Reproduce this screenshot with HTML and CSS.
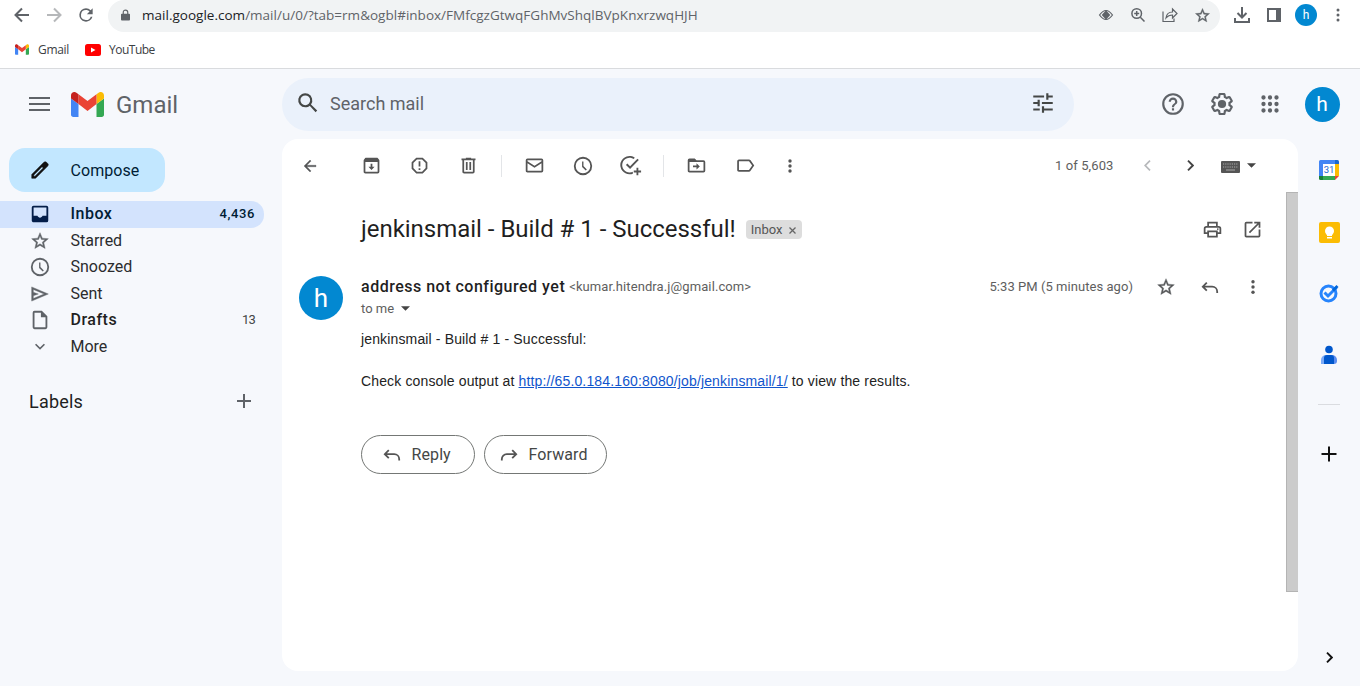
FILE: index.html
```html
<!DOCTYPE html>
<html lang="en">
<head>
<meta charset="utf-8">
<title>Gmail</title>
<link rel="stylesheet" href="styles.css">
</head>
<body>
<div class="chrome">
  <div class="navbar">
    <div class="slot"><svg class="i24 stroke" viewBox="0 0 24 24"><path d="M19 12H6M12 5.500L5.500 12l6.500 6.500"/></svg></div>
    <div class="slot faded"><svg class="i24 stroke" viewBox="0 0 24 24"><path d="M5 12h13M12 5.500l6.500 6.500-6.500 6.500"/></svg></div>
    <div class="slot"><svg class="i20" viewBox="0 0 24 24"><path d="M17.650 6.350A7.960 7.960 0 0 0 12 4a8 8 0 1 0 7.730 10h-2.080A6 6 0 1 1 12 6c1.660 0 3.140.690 4.220 1.780L13 11h7V4z"/></svg></div>
    <div class="omnibox">
      <svg class="lock" viewBox="0 0 10 12"><path d="M1 4.500h8a1 1 0 0 1 1 1V11a1 1 0 0 1-1 1H1a1 1 0 0 1-1-1V5.500a1 1 0 0 1 1-1z"/><path d="M2.500 5V3a2.500 2.500 0 0 1 5 0v2" fill="none" stroke="#5f6368" stroke-width="1.300"/></svg>
      <div class="url"><b>mail.google.com</b>/mail/u/0/?tab=rm&amp;ogbl#inbox/FMfcgzGtwqFGhMvShqlBVpKnxrzwqHJH</div>
      <div class="slot"><svg class="i16" viewBox="0 0 16 16"><path d="M1.500 8Q8-1 14.500 8Q8 17 1.500 8z" fill="none" stroke="#5f6368" stroke-width="1.200"/><path d="M8 3.200L12.300 8 8 12.800 3.700 8z"/></svg></div>
      <div class="slot"><svg class="i16" viewBox="0 0 16 16" fill="none" stroke="#5f6368" stroke-width="1.500"><circle cx="6.700" cy="6.500" r="4.800"/><path d="M10.300 10.300l4.200 4.200M4.200 6.500h5M6.700 4v5"/></svg></div>
      <div class="slot"><svg class="i16" viewBox="0 0 16 16" fill="none" stroke="#5f6368" stroke-width="1.200"><path d="M1 4.500v10h11v-3M4 11c.5-4 3-6 6.500-6V2l4.500 4.500L10.500 11V8C8 8 6 8.500 4 11z"/></svg></div>
      <div class="slot"><svg class="i17 bolder" viewBox="0 0 24 24"><path d="M22 9.240l-7.190-.620L12 2 9.190 8.630 2 9.240l5.460 4.730L5.820 21 12 17.270 18.180 21l-1.630-7.030L22 9.240zM12 15.400l-3.760 2.270 1-4.280-3.320-2.880 4.380-.380L12 6.100l1.710 4.040 4.380.380-3.320 2.880 1 4.280L12 15.400z"/></svg></div>
    </div>
    <div class="slot first"><svg class="i18" viewBox="0 0 18 18" fill="none" stroke="#5f6368" stroke-width="2"><path d="M2 12v4h14v-4M9 1v10M4.500 7L9 11.500 13.500 7"/></svg></div>
    <div class="slot"><svg class="i14" viewBox="0 0 14 14"><path d="M0 0h14v14H0zM2 2v10h7V2z" fill-rule="evenodd"/></svg></div>
    <div class="slot"><div class="avatar tiny">h</div></div>
    <div class="slot"><svg class="i16" viewBox="0 0 16 16"><circle cx="8" cy="3" r="1.500"/><circle cx="8" cy="8" r="1.500"/><circle cx="8" cy="13" r="1.500"/></svg></div>
  </div>
  <div class="bookmarks">
    <svg class="gm-small" viewBox="52 42 88 66"><path fill="#4285f4" d="M58 108h14V74L52 59v43c0 3.320 2.690 6 6 6"/><path fill="#34a853" d="M120 108h14c3.320 0 6-2.690 6-6V59l-20 15"/><path fill="#fbbc04" d="M120 48v26l20-15v-8c0-7.420-8.470-11.650-14.400-7.200"/><path fill="#ea4335" d="M72 74V48l24 18 24-18v26L96 92"/><path fill="#c5221f" d="M52 51v8l20 15V48l-5.600-4.200c-5.940-4.450-14.400-.220-14.400 7.200"/></svg>
    <span class="bm-gmail">Gmail</span>
    <svg class="yt" viewBox="0 0 16 12"><rect width="16" height="12" rx="2.500" fill="#f00"/><path d="M6 3.500v5L10.500 6z" fill="#fff"/></svg>
    <span class="bm-yt">YouTube</span>
  </div>
</div>

<div class="app">
  <header class="header">
    <svg class="burger" viewBox="0 0 21 14"><path d="M0 1h21M0 7h21M0 13h21" stroke="#5f6368" stroke-width="2"/></svg>
    <svg class="gm-logo" viewBox="52 42 88 66" preserveAspectRatio="none"><path fill="#4285f4" d="M58 108h14V74L52 59v43c0 3.320 2.690 6 6 6"/><path fill="#34a853" d="M120 108h14c3.320 0 6-2.690 6-6V59l-20 15"/><path fill="#fbbc04" d="M120 48v26l20-15v-8c0-7.420-8.470-11.650-14.400-7.200"/><path fill="#ea4335" d="M72 74V48l24 18 24-18v26L96 92"/><path fill="#c5221f" d="M52 51v8l20 15V48l-5.600-4.200c-5.940-4.450-14.400-.220-14.400 7.200"/></svg>
    <div class="wordmark">Gmail</div>
    <div class="search">
      <svg class="i26 dark" viewBox="0 0 24 24"><path d="M20.490 19l-5.730-5.730A6.500 6.500 0 1 0 9.500 16c1.610 0 3.090-.590 4.230-1.570L13.750 14.700 19 20.490zM5 9.500a4.500 4.500 0 1 1 9 0 4.500 4.500 0 0 1-9 0z" fill-rule="evenodd"/></svg>
      <span class="placeholder">Search mail</span>
      <svg class="i26 dark" viewBox="0 0 24 24"><path d="M3 17v2h6v-2H3zM3 5v2h10V5H3zm10 16v-2h8v-2h-8v-2h-2v6h2zM7 9v2H3v2h4v2h2V9H7zm14 4v-2H11v2h10zm-6-4h2V7h4V5h-4V3h-2v6z"/></svg>
    </div>
    <div class="head-icons">
      <svg class="i26" viewBox="0 0 24 24"><path d="M11 18h2v-2h-2v2zm1-16a10 10 0 1 0 0 20 10 10 0 0 0 0-20zm0 18a8 8 0 1 1 0-16 8 8 0 0 1 0 16zm0-14a4 4 0 0 0-4 4h2a2 2 0 1 1 4 0c0 2-3 1.750-3 5h2c0-2.250 3-2.500 3-5a4 4 0 0 0-4-4z"/></svg>
      <svg class="i26" viewBox="0 0 24 24"><path d="M13.850 22.250h-3.700c-.740 0-1.360-.540-1.450-1.270l-.270-1.890c-.270-.140-.530-.290-.790-.460l-1.800.720c-.700.260-1.470-.030-1.810-.650L2.200 15.530c-.350-.660-.200-1.440.360-1.880l1.530-1.190c-.010-.150-.020-.300-.020-.460 0-.150.010-.310.020-.460l-1.520-1.190c-.590-.450-.740-1.260-.370-1.880l1.850-3.190c.340-.620 1.110-.900 1.790-.630l1.810.730c.260-.170.520-.320.780-.460l.270-1.910c.090-.700.710-1.250 1.440-1.250h3.700c.740 0 1.360.540 1.450 1.270l.270 1.890c.270.140.530.290.790.460l1.800-.720c.710-.260 1.480.030 1.820.650l1.840 3.180c.360.660.200 1.440-.360 1.880l-1.520 1.190c.010.150.020.300.020.460s-.010.310-.020.460l1.520 1.190c.560.450.720 1.230.370 1.860l-1.860 3.220c-.340.620-1.110.900-1.800.630l-1.800-.720c-.260.170-.520.320-.780.460l-.270 1.910c-.100.680-.720 1.220-1.460 1.220zm-3.230-2h2.760l.370-2.550.530-.220c.440-.180.880-.440 1.340-.780l.450-.340 2.380.960 1.380-2.400-2.030-1.580.070-.560c.030-.260.060-.510.060-.780s-.030-.530-.060-.780l-.070-.560 2.030-1.580-1.390-2.400-2.390.960-.450-.350c-.420-.320-.870-.580-1.330-.770l-.520-.220-.370-2.550h-2.760l-.370 2.550-.530.210c-.440.190-.880.440-1.340.790l-.450.330-2.380-.950-1.390 2.390 2.030 1.580-.070.560a7 7 0 0 0 0 1.560l.070.560-2.030 1.580 1.380 2.400 2.390-.960.450.350c.430.330.860.580 1.330.770l.530.220z"/><circle cx="12" cy="12" r="3.800"/></svg>
      <svg class="i26" viewBox="0 0 24 24"><path d="M6 8a2 2 0 1 0 0-4 2 2 0 0 0 0 4zm6 12a2 2 0 1 0 0-4 2 2 0 0 0 0 4zm-6 0a2 2 0 1 0 0-4 2 2 0 0 0 0 4zm0-6a2 2 0 1 0 0-4 2 2 0 0 0 0 4zm6 0a2 2 0 1 0 0-4 2 2 0 0 0 0 4zm6-6a2 2 0 1 0 0-4 2 2 0 0 0 0 4zm-6 0a2 2 0 1 0 0-4 2 2 0 0 0 0 4zm6 6a2 2 0 1 0 0-4 2 2 0 0 0 0 4zm0 6a2 2 0 1 0 0-4 2 2 0 0 0 0 4z"/></svg>
      <div class="avatar mid">h</div>
    </div>
  </header>

  <div class="columns">
    <nav class="sidebar">
      <div class="compose">
        <svg class="i22 black" viewBox="0 0 24 24"><path d="M20.410 4.940l-1.350-1.350a2 2 0 0 0-2.830 0L3 16.820V21h4.180L20.410 7.770a2 2 0 0 0 0-2.830zM6.350 19L5 17.650l9.200-9.200 1.350 1.350L6.350 19z" stroke="#111" stroke-width=".6"/></svg>
        <span class="t-compose">Compose</span>
      </div>
      <div class="item active"><svg class="i22" viewBox="0 0 24 24"><path d="M19 3H5a2 2 0 0 0-2 2v14c0 1.100.900 2 2 2h14a2 2 0 0 0 2-2V5a2 2 0 0 0-2-2zm0 11h-4.200c-.500 1.200-1.600 2-2.800 2s-2.300-.800-2.800-2H5V5h14z"/></svg><span class="t-inbox">Inbox</span><em>4,436</em></div>
      <div class="item"><svg class="i20 bolder" viewBox="0 0 24 24"><path d="M22 9.240l-7.190-.620L12 2 9.190 8.630 2 9.240l5.460 4.730L5.820 21 12 17.270 18.180 21l-1.630-7.030L22 9.240zM12 15.400l-3.760 2.270 1-4.280-3.320-2.880 4.380-.380L12 6.100l1.710 4.040 4.380.380-3.320 2.880 1 4.280L12 15.400z"/></svg><span class="t-star">Starred</span></div>
      <div class="item"><svg class="i22" viewBox="0 0 24 24"><path d="M12 2a10 10 0 1 0 0 20 10 10 0 0 0 0-20zm0 18a8 8 0 1 1 0-16 8 8 0 0 1 0 16zM12.500 7H11v6l4 4 1.200-1.200-3.700-3.800z"/></svg><span class="t-snooze">Snoozed</span></div>
      <div class="item"><svg class="i20 bolder" viewBox="0 0 24 24"><path d="M2 3.500v17L22 12 2 3.500zm2 3L17 12 4 17.500V14l6-2-6-2z"/></svg><span class="t-sent">Sent</span></div>
      <div class="item bold"><svg class="i22" viewBox="0 0 24 24"><path d="M14 2H6a2 2 0 0 0-2 2v16a2 2 0 0 0 2 2h12a2 2 0 0 0 2-2V8l-6-6zM6 20V4h7v5h5v11H6z"/></svg><span class="t-draft">Drafts</span><em>13</em></div>
      <div class="item"><svg class="i20" viewBox="0 0 24 24"><path d="M7.400 8L12 12.600 16.600 8 18 9.400l-6 6-6-6z"/></svg><span class="t-more">More</span></div>
      <div class="labels"><span class="t-labels">Labels</span><svg class="i14" viewBox="0 0 14 14"><path d="M0 7h14M7 0v14" stroke="#5f6368" stroke-width="2"/></svg></div>
    </nav>

    <main class="card">
      <div class="toolbar">
        <div class="tb"><svg class="i18 bolder" viewBox="0 0 24 24"><path d="M20 11H7.830l5.590-5.590L12 4l-8 8 8 8 1.410-1.410L7.830 13H20v-2z"/></svg></div>
        <div class="tb gap14"><svg class="i21" viewBox="0 0 24 24"><path d="M20.500 5.200l-1.400-1.700C18.900 3.200 18.500 3 18 3H6c-.500 0-.900.200-1.200.500L3.500 5.200C3.200 5.600 3 6 3 6.500V19c0 1.100.900 2 2 2h14a2 2 0 0 0 2-2V6.500c0-.500-.200-.900-.500-1.300zM5 19V8h14v11H5zM11 10v3.500H8.500l3.500 3.500 3.500-3.500H13V10z"/></svg></div>
        <div class="tb"><svg class="i21" viewBox="0 0 24 24"><path d="M15.700 3H8.300L3 8.300v7.400L8.300 21h7.400l5.300-5.300V8.300L15.700 3zM19 14.900L14.900 19H9.100L5 14.900V9.100L9.100 5h5.800L19 9.100v5.800zM11 7h2v6h-2zM11 15h2v2h-2z"/></svg></div>
        <div class="tb gap1"><svg class="i21" viewBox="0 0 24 24"><path d="M15 4V3H9v1H4v2h1v13c0 1.100.900 2 2 2h10a2 2 0 0 0 2-2V6h1V4h-5zm2 15H7V6h10v13zM9 8h2v9H9zM13 8h2v9h-2z"/></svg></div>
        <i class="sep"></i>
        <div class="tb gap9"><svg class="i21" viewBox="0 0 24 24"><path d="M20 4H4a2 2 0 0 0-2 2v12c0 1.100.900 2 2 2h16a2 2 0 0 0 2-2V6a2 2 0 0 0-2-2zm0 2v1l-8 5.200L4 7V6h16zM4 18V9.300l8 5.200 8-5.200V18H4z"/></svg></div>
        <div class="tb"><svg class="i22" viewBox="0 0 24 24"><path d="M12 2a10 10 0 1 0 0 20 10 10 0 0 0 0-20zm0 18a8 8 0 1 1 0-16 8 8 0 0 1 0 16zM12.500 7H11v6l4 4 1.200-1.200-3.700-3.800z"/></svg></div>
        <div class="tb"><svg class="i22" viewBox="0 0 24 24"><path d="M10.500 19a8 8 0 1 1 4.300-14.700l1.400-1.400A10 10 0 1 0 10.500 21c1.300 0 2.500-.200 3.500-.600v-2.200c-1 .500-2.200.800-3.500.800z"/><path d="M19 4l-8 8.300-3-3-1.500 1.500 4.500 4.500L20.500 5.500zM18 14v3h-3v2h3v3h2v-3h3v-2h-3v-3z"/></svg></div>
        <i class="sep"></i>
        <div class="tb gap9"><svg class="i21" viewBox="0 0 24 24"><path d="M20 6h-8l-2-2H4a2 2 0 0 0-2 2v12c0 1.100.900 2 2 2h16a2 2 0 0 0 2-2V8a2 2 0 0 0-2-2zm0 12H4V8h16v10zM12 9.500V12H8v2h4v2.500l3.800-3.500z"/><path d="M3 5h7l2 3H3z"/></svg></div>
        <div class="tb gap1"><svg class="i21" viewBox="0 0 24 24"><path d="M16 5H4.500A2 2 0 0 0 2.500 7v10c0 1.100.900 2 2 2H16c.700 0 1.300-.300 1.600-.800L22 12l-4.400-6.200C17.300 5.300 16.700 5 16 5zm0 12H4.500V7H16l3.600 5L16 17z"/></svg></div>
        <div class="tb narrow"><svg class="i18" viewBox="0 0 18 18"><circle cx="9" cy="4" r="1.700"/><circle cx="9" cy="9" r="1.700"/><circle cx="9" cy="14" r="1.700"/></svg></div>
        <div class="pager"><span class="t-page">1 of 5,603</span></div>
        <svg class="chev faded" viewBox="0 0 7 11"><path d="M6 .700L1.200 5.500 6 10.300" fill="none" stroke="#5f6368" stroke-width="1.700"/></svg>
        <svg class="chev right" viewBox="0 0 7 11"><path d="M1 .700l4.800 4.800L1 10.300" fill="none" stroke="#444" stroke-width="1.900"/></svg>
        <svg class="kbd" viewBox="0 0 19 12"><rect width="19" height="12" rx="1" fill="#555"/><path d="M2 3h15M2 6h15" stroke="#aaa" stroke-width="1" stroke-dasharray="1.200 1"/><path d="M5 9h9" stroke="#aaa"/></svg>
        <svg class="caret" viewBox="0 0 10 5"><path d="M0 0h10L5 5z"/></svg>
      </div>
      <div class="body">
        <article class="mail">
          <div class="subject">
            <h1>jenkinsmail - Build # 1 - Successful!</h1>
            <div class="tag"><span class="t-tag">Inbox</span><svg class="x" viewBox="0 0 7 7"><path d="M.5.5l6 6M6.500.500l-6 6" stroke="#666" stroke-width="1.300"/></svg></div>
            <div class="subject-icons">
              <svg class="i21" viewBox="0 0 24 24"><path d="M19 8h-1V3H6v5H5a3 3 0 0 0-3 3v6h4v4h12v-4h4v-6a3 3 0 0 0-3-3zM8 5h8v3H8V5zm8 12v2H8v-4h8v2zm2-2v-2H6v2H4v-4a1 1 0 0 1 1-1h14a1 1 0 0 1 1 1v4h-2z"/><circle cx="18" cy="11.500" r="1"/></svg>
              <svg class="i21" viewBox="0 0 24 24"><path d="M19 19H5V5h7V3H5a2 2 0 0 0-2 2v14c0 1.100.900 2 2 2h14a2 2 0 0 0 2-2v-7h-2v7zM14 3v2h3.590l-9.830 9.830 1.410 1.410L19 6.410V10h2V3h-7z"/></svg>
            </div>
          </div>
          <div class="sender">
            <div class="avatar big">h</div>
            <div class="who">
              <div class="line1"><b class="t-name">address not configured yet</b><span class="t-addr">&lt;kumar.hitendra.j@gmail.com&gt;</span></div>
              <div class="line2"><span class="t-tome">to me</span><svg class="caret" viewBox="0 0 10 5"><path d="M0 0h10L5 5z"/></svg></div>
            </div>
            <div class="meta">
              <span class="t-time">5:33 PM (5 minutes ago)</span>
              <svg class="i20 bolder" viewBox="0 0 24 24"><path d="M22 9.240l-7.190-.620L12 2 9.190 8.630 2 9.240l5.460 4.730L5.820 21 12 17.270 18.180 21l-1.630-7.030L22 9.240zM12 15.400l-3.760 2.270 1-4.280-3.320-2.880 4.380-.380L12 6.100l1.710 4.040 4.380.380-3.320 2.880 1 4.280L12 15.400z"/></svg>
              <svg class="i20" viewBox="0 0 20 20"><path d="M6.800 5.700L2.800 9.700l4 4M3 9.700h9.200a5 5 0 0 1 5 5V16" fill="none" stroke="#555" stroke-width="1.800"/></svg>
              <svg class="i18" viewBox="0 0 18 18"><circle cx="9" cy="3.700" r="1.700"/><circle cx="9" cy="9" r="1.700"/><circle cx="9" cy="14.300" r="1.700"/></svg>
            </div>
          </div>
          <div class="content">
            <p>jenkinsmail - Build # 1 - Successful:</p>
            <p>Check console output at <a>http://65.0.184.160:8080/job/jenkinsmail/1/</a> to view the results.</p>
          </div>
          <div class="actions">
            <div class="btn reply"><svg class="i20" viewBox="0 0 20 20"><path d="M6.800 5.200L2.800 9.200l4 4M3 9.200h9.200a5 5 0 0 1 5 5V15.500" fill="none" stroke="#555" stroke-width="1.800"/></svg><span class="t-reply">Reply</span></div>
            <div class="btn forward"><svg class="i20" viewBox="0 0 20 20"><path d="M13.200 5.200l4 4-4 4M17 9.200H7.800a5 5 0 0 0-5 5V15.500" fill="none" stroke="#555" stroke-width="1.800"/></svg><span class="t-fwd">Forward</span></div>
          </div>
        </article>
        <div class="scrollbar"></div>
      </div>
    </main>

    <aside class="panel">
      <svg class="app-icon" viewBox="0 0 20 20"><path d="M0 1.500A1.500 1.500 0 0 1 1.500 0H16v4H4v12H0z" fill="#4285f4"/><path d="M16 0h2.500A1.500 1.500 0 0 1 20 1.500V4h-4z" fill="#1967d2"/><path d="M16 4h4v12h-4z" fill="#fbbc04"/><path d="M4 16h12v4H4z" fill="#34a853"/><path d="M0 16h4v4H1.500A1.500 1.500 0 0 1 0 18.500z" fill="#188038"/><path d="M16 16h4l-4 4z" fill="#ea4335"/><path d="M4 4h12v12H4z" fill="#fff"/><text class="cal" x="10" y="13.200" text-anchor="middle">31</text></svg>
      <svg class="app-icon keep" viewBox="0 0 21 21"><rect width="21" height="21" rx="2" fill="#fbbc04"/><circle cx="10.500" cy="9" r="4.500" fill="#fff"/><path d="M8 11h5v3H8zM8 15h5v1.500H8z" fill="#fff"/></svg>
      <svg class="app-icon tasks" viewBox="0 0 20 20"><circle cx="9.500" cy="10.500" r="7.500" fill="none" stroke="#2684fc" stroke-width="3"/><path d="M5.500 9.500l3.500 3.500 8.500-8.500" fill="none" stroke="#2684fc" stroke-width="3"/><path d="M13 6.500L17.500 2l2 2-4.500 4.500z" fill="#0066da"/></svg>
      <svg class="app-icon contacts" viewBox="0 0 20 20"><circle cx="10" cy="4.500" r="3.800" fill="#0057cc"/><path d="M2 19v-4a5 5 0 0 1 5-5h6v9z" fill="#7baaf7"/><path d="M8 10h5a5 5 0 0 1 5 5v1a3 3 0 0 1-3 3H8z" fill="#5b8def"/><path d="M5 19v-6a3 3 0 0 1 3-3h4a3 3 0 0 1 3 3v6z" fill="#0057cc"/></svg>
      <i class="divider"></i>
      <svg class="i16 plus" viewBox="0 0 16 16"><path d="M.5 8h15M8 .5v15" stroke="#111" stroke-width="2"/></svg>
      <svg class="chev right last" viewBox="0 0 7 11"><path d="M1 .700l4.800 4.800L1 10.300" fill="none" stroke="#111" stroke-width="1.900"/></svg>
    </aside>
  </div>
</div>
</body>
</html>
```
FILE: styles.css
```css
* { box-sizing: border-box; }
body { margin: 0; width: 1360px; height: 686px; overflow: hidden; background: #f6f8fc; color: #1f1f1f; font-family: Roboto, "Liberation Sans", sans-serif; }
svg { display: block; flex: none; fill: #5f6368; }
svg[fill="none"] { fill: none; }
span, b, h1, em { white-space: nowrap; }
.stroke { fill: none; stroke: #5f6368; stroke-width: 2; }
.bolder { stroke: #5f6368; stroke-width: .5; }
.faded { opacity: .45; }
.dark { fill: #444746; }
.black { fill: #111; }
.i14 { width: 14px; height: 14px; }
.i16 { width: 16px; height: 16px; }
.i17 { width: 17px; height: 17px; }
.i18 { width: 18px; height: 18px; }
.i20 { width: 20px; height: 20px; }
.i21 { width: 21px; height: 21px; }
.i22 { width: 22px; height: 22px; }
.i24 { width: 24px; height: 24px; }
.i26 { width: 26px; height: 26px; }

.chrome { height: 69px; background: #fff; border-bottom: 1px solid #d9dbde; font-family: "Open Sans", "Noto Sans", sans-serif; }
.navbar { display: flex; align-items: center; height: 32px; padding-left: 6px; }
.slot { display: flex; align-items: center; justify-content: center; width: 32px; height: 30px; margin-bottom: 2px; }
.first { margin-left: 6px; }
.omnibox { display: flex; align-items: center; width: 1112px; height: 32px; margin-left: 6px; padding: 0 2px 0 13px; border-radius: 16px; background: #f1f3f4; }
.lock { width: 9px; height: 12px; margin: 0 12px 2px 0; }
.url { flex: 1; margin-bottom: 2px; color: #5f6368; font-size: 13.500px; letter-spacing: .015px; white-space: nowrap; }
.url b { color: #202124; font-weight: 400; }
.bookmarks { display: flex; align-items: center; height: 35px; padding-left: 15px; font-size: 12px; color: #3c4043; }
.bm-gmail { width: 31px; letter-spacing: -.3px; }
.bm-yt { letter-spacing: -.5px; }
.gm-small { width: 14px; height: 11px; margin-right: 9px; }
.yt { width: 16px; height: 12px; margin: 0 8px 0 16px; }

.avatar { display: flex; align-items: center; justify-content: center; flex: none; border-radius: 50%; background: #0288d1; color: #fff; font-family: Roboto, sans-serif; }
.tiny { width: 22px; height: 22px; font-size: 12px; }
.mid { width: 35px; height: 35px; font-size: 21px; }
.big { width: 44px; height: 44px; font-size: 26px; }

.header { display: flex; align-items: center; height: 70px; padding-left: 29px; }
.burger { width: 21px; height: 14px; }
.gm-logo { width: 33px; height: 25px; margin-left: 21px; }
.wordmark { width: 166px; margin-left: 12px; margin-top: 2px; color: #5f6368; font-size: 24px; }
.search { display: flex; align-items: center; width: 792px; height: 53px; margin-top: 1px; padding: 0 18px 3px 13px; border-radius: 27px; background: #eaf1fb; }
.placeholder { flex: 1; margin-left: 9px; color: #5f6368; font-size: 18px; }
.head-icons { display: flex; align-items: center; margin-left: 86px; gap: 22.500px; }
.head-icons .avatar { margin-left: -1px; }

.columns { display: flex; height: 547px; }
.sidebar { width: 282px; padding-top: 9px; font-size: 16px; }
.compose { display: flex; align-items: center; width: 156px; height: 44px; margin: 0 0 9px 9px; padding-left: 20px; border-radius: 16px; background: #c2e7ff; color: #001d35; }
.compose span { margin-left: 19.500px; letter-spacing: .05px; }
.item { display: flex; align-items: center; width: 264px; height: 26.500px; padding: 0 9px 1px 29px; color: #2b2c2e; }
.item svg { margin-right: 19.500px; }
.item .i20 { margin: 1px 20.500px 0 1px; }
.item span { flex: 1; }
.item em { font-style: normal; font-size: 13px; color: #444746; letter-spacing: -.8px; }
.active { border-radius: 0 13px 13px 0; background: #d3e3fd; color: #001d35; font-weight: 500; }
.active span { letter-spacing: .5px; }
.active svg { fill: #041e49; }
.item.active em { color: #001d35; font-weight: 500; letter-spacing: .6px; }
.bold span { font-weight: 500; color: #1f1f1f; letter-spacing: .5px; }
.labels { display: flex; align-items: center; justify-content: space-between; height: 30px; width: 251px; margin-top: 26px; padding-left: 29px; font-size: 18px; letter-spacing: .2px; }

.card { display: flex; flex-direction: column; width: 1016px; height: 532px; border-radius: 16px; background: #fff; overflow: hidden; }
.toolbar { display: flex; align-items: center; height: 53px; padding-left: 4px; }
.tb { display: flex; justify-content: center; width: 48px; }
.tb .i21 { margin-right: 1px; }
.tb svg, .subject-icons svg, .meta svg { fill: #555; }
.gap14 { margin-left: 14px; }
.gap1 { margin-left: 1px; }
.gap9 { margin-left: 9px; }
.narrow { width: 24px; margin-left: 8px; }
.sep { width: 1px; height: 22px; margin-left: 8px; background: #e3e5e8; }
.pager { width: 342px; padding-left: 253px; font-size: 13px; letter-spacing: .1px; color: #5e5e5e; }
.chev { width: 7px; height: 11px; }
.chev.right { margin-left: 36px; }
.kbd { width: 19px; height: 12px; margin: 3px 7px 0 27px; }
.caret { width: 9px; height: 5px; fill: #444; }
.body { display: flex; flex: 1; }
.mail { flex: 1; }
.scrollbar { width: 12px; height: 400px; border: 1px solid #b4b4b4; border-right: 0; background: #cbcbcb; }
.subject { display: flex; align-items: center; height: 74px; padding: 0 23px 0 79px; }
h1 { margin: 0; font-size: 24px; font-weight: 400; line-height: 30px; letter-spacing: -.02px; }
.tag { display: flex; align-items: center; width: 56px; height: 19px; margin: 1px 0 0 10px; padding-left: 5px; border-radius: 4px; background: #ddd; color: #555; font-size: 13px; }
.x { width: 7px; height: 7px; margin: 1px 0 0 6px; }
.subject-icons { display: flex; gap: 19px; margin: 1px 0 0 auto; }
.sender { display: flex; height: 54px; padding: 10px 24px 0 17px; }
.who { margin-left: 18px; }
.line1 { display: flex; align-items: center; height: 20px; }
.line2 { display: flex; align-items: center; height: 24px; color: #5e5e5e; font-size: 13px; }
.line2 .caret { margin-left: 7px; }
.t-name { font-size: 16px; font-weight: 500; letter-spacing: .5px; }
.t-addr { margin-left: 4px; color: #5e5e5e; font-size: 13px; letter-spacing: .1px; }
.meta { display: flex; align-items: center; height: 22px; margin-left: auto; color: #5e5e5e; font-size: 13px; }
.meta .t-time { margin-bottom: 2px; letter-spacing: .05px; }
.meta svg { margin-left: 24px; }
.meta .t-time + svg { margin-left: 23px; }
.content { height: 115px; padding: 9px 0 0 79px; font: 14px/21px "Liberation Sans", sans-serif; letter-spacing: .143px; color: #222; }
.content p { margin: 0 0 21px; white-space: nowrap; }
.content a { color: #15c; text-decoration: underline; }
.actions { display: flex; gap: 9px; padding-left: 79px; }
.btn { display: flex; align-items: center; height: 39px; padding: 0 0 1px 20px; border: 1px solid #747775; border-radius: 20px; color: #444746; font-size: 16px; }
.btn svg { margin-top: 2px; }
.reply { width: 114px; }
.forward { width: 123px; padding-left: 14px; }
.btn span { margin-left: 9.500px; letter-spacing: .1px; }
.panel { display: flex; flex-direction: column; align-items: center; width: 62px; padding-top: 21px; }
.app-icon { width: 20px; height: 20px; margin-bottom: 41.700px; }
.keep { width: 21px; height: 21px; margin-bottom: 40.700px; }
.cal { fill: #1967d2; font: 9.500px Roboto, sans-serif; }
.divider { width: 22px; height: 1px; margin: -3px 0 41px; background: #dadce0; }
.last { margin: auto 0 23px !important; }
```
